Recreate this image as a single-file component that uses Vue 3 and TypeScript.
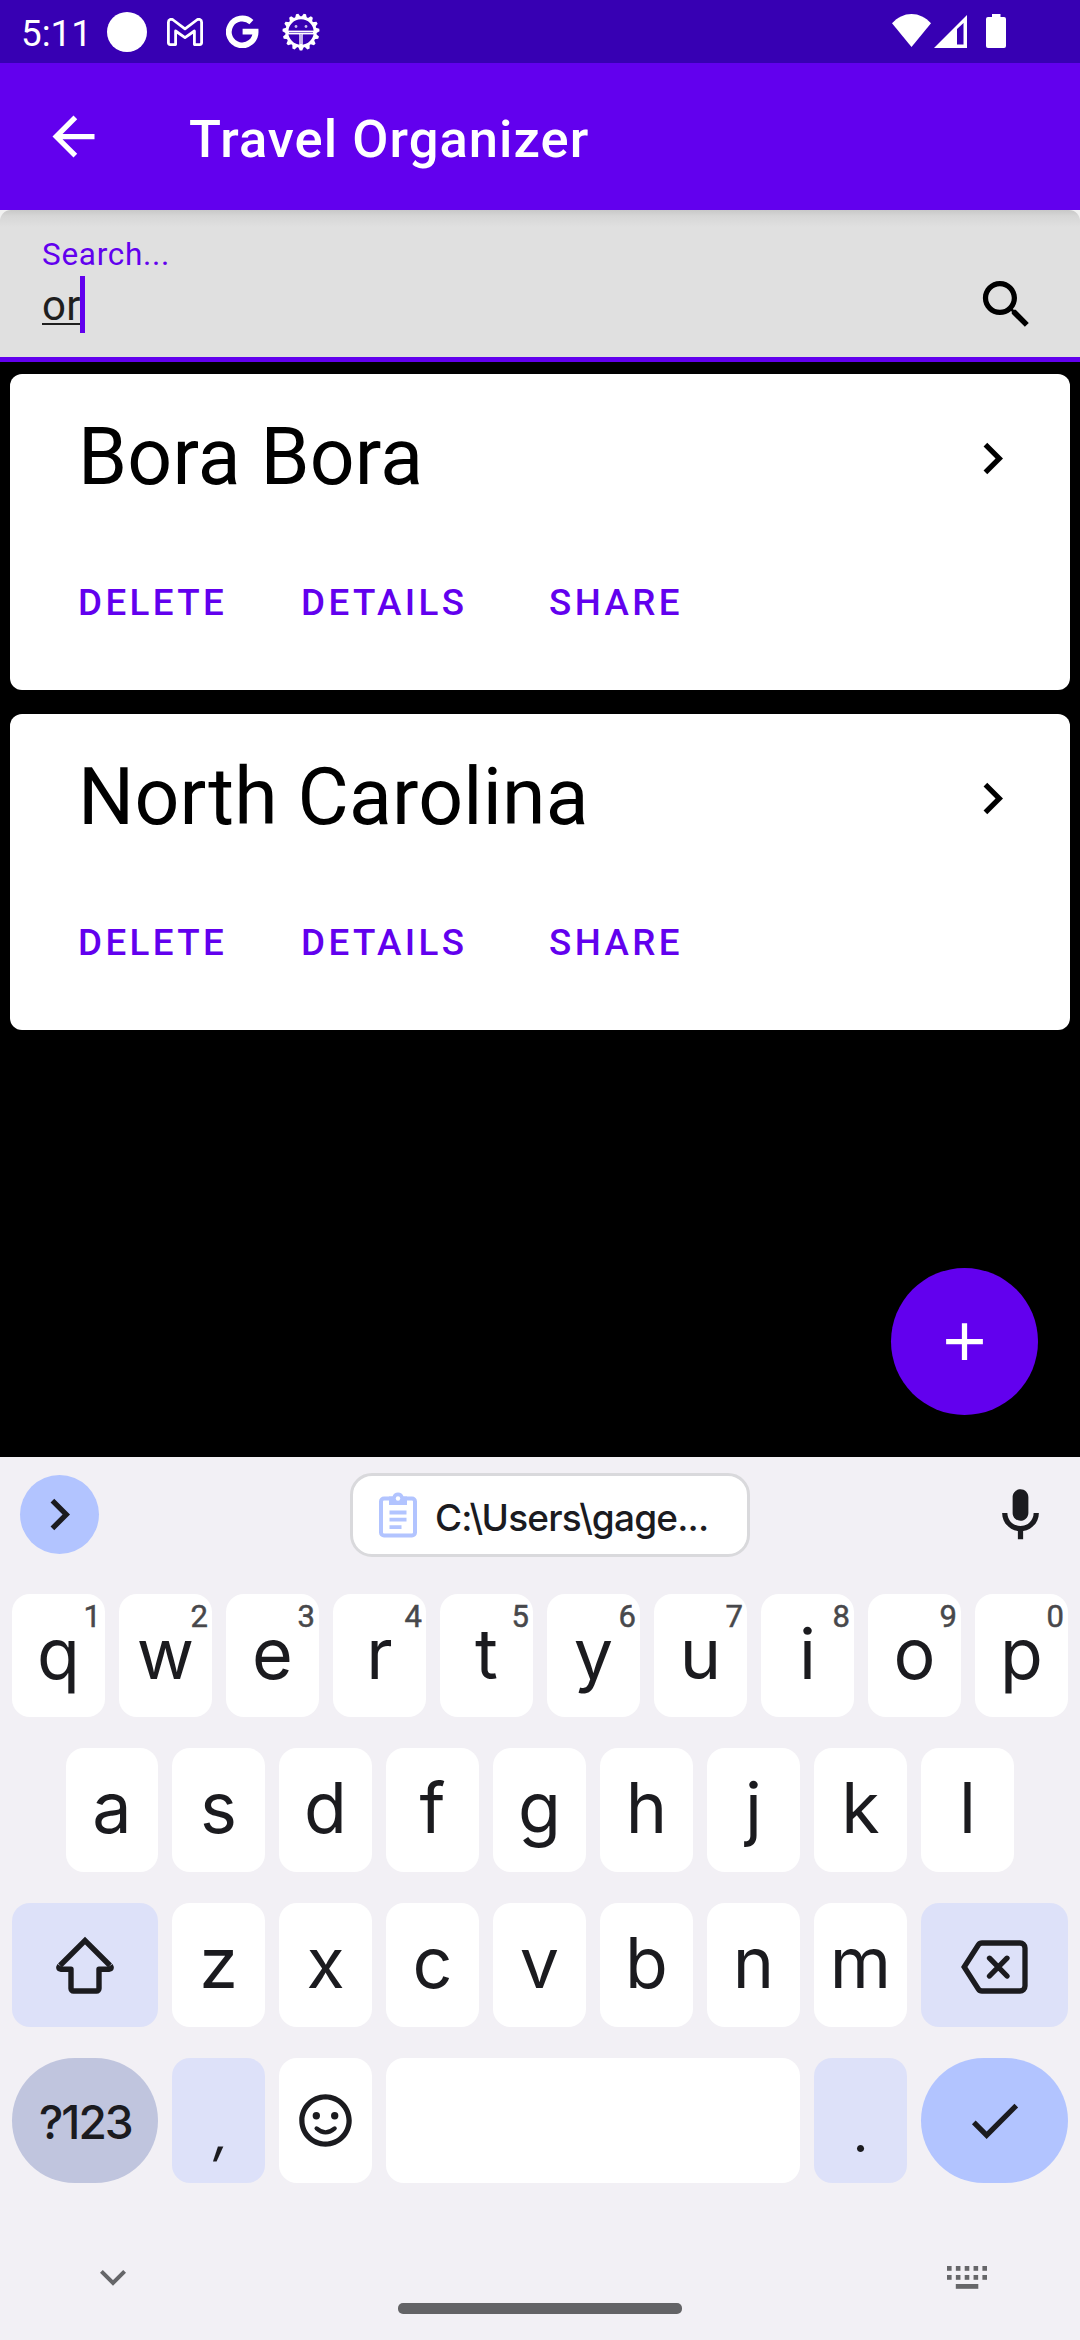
<script setup lang="ts">
interface Key {
  label: string
  hint?: string
}

const trips: string[] = ['Bora Bora', 'North Carolina']
const topRow: Key[] = 'qwertyuiop'.split('').map((label, i) => ({ label, hint: String((i + 1) % 10) }))
const homeRow: string[] = 'asdfghjkl'.split('')
const lowerRow: string[] = 'zxcvbnm'.split('')
const teeth: number[] = Array.from({ length: 15 }, (_, i) => i * 24 + 12)
const dots: number[] = [0, 1, 2, 3, 4]
</script>

<template>
  <div class="screen">
    <div class="status">
      <span class="clock">5:11</span>
      <span class="disc"></span>
      <svg class="gmail" width="36" height="28" viewBox="0 0 36 28" fill="none" stroke="#fff" stroke-width="2.8" stroke-linejoin="round">
        <path d="M1.400 4.300v20.300a2 2 0 0 0 2 2h5.200V13L18 19.600 27.400 13v13.600h5.200a2 2 0 0 0 2-2V4.300c0-2.700-2.800-3.800-4.800-2.300L18 10.800 6.200 2C4.200.5 1.400 1.600 1.400 4.300z" />
      </svg>
      <svg class="google" width="33" height="33" viewBox="0 0 33 33" fill="none" stroke="#fff" stroke-width="5.800">
        <path d="M25.400 7.200A13.400 13.400 0 1 0 29.600 16.600H16.600" />
      </svg>
      <svg class="bug" width="38" height="38" viewBox="-19 -19 38 38">
        <circle r="14.200" fill="none" stroke="#fff" stroke-width="3" />
        <path v-for="a in teeth" :key="a" d="M-3-14.500-1.200-18.500H1.200L3-14.500z" fill="#fff" :transform="`rotate(${a})`" />
        <path d="M-13 .5H13" stroke="#fff" stroke-width="3.800" />
        <path d="M0 2V14" stroke="#fff" stroke-width="3.400" />
        <path d="M-12 .5H12M0 2V12" stroke="#8a6bd6" stroke-width="1" />
        <circle cx="-5" cy="-5.500" r="1.400" fill="#cbbcee" />
        <circle cx="5" cy="-5.500" r="1.400" fill="#cbbcee" />
      </svg>
      <svg class="wifi" width="39" height="33" viewBox="0 0 39 33" fill="#fff">
        <path d="M19.500 33 0 9.200C5.500 3.400 12 0 19.500 0S33.500 3.400 39 9.200z" />
      </svg>
      <svg class="signal" width="33" height="33" viewBox="0 0 33 33" fill="#fff">
        <path fill-rule="evenodd" d="M0 33 33 0v33zM23 14v15.500h6.500V8z" />
      </svg>
      <svg class="battery" width="20" height="34" viewBox="0 0 20 34" fill="#fff">
        <path d="M6 0h8.500v3H18a2 2 0 0 1 2 2v27a2 2 0 0 1-2 2H2a2 2 0 0 1-2-2V5a2 2 0 0 1 2-2h4z" />
      </svg>
    </div>

    <header class="appbar">
      <svg class="icon" viewBox="0 0 24 24" fill="#fff"><path d="M20 11H7.830l5.590-5.590L12 4l-8 8 8 8 1.410-1.410L7.830 13H20v-2z" /></svg>
      <h1>Travel Organizer</h1>
    </header>

    <div class="field-wrap">
      <div class="field">
        <div class="field-text">
          <label>Search...</label>
          <div class="value"><span>or</span><i class="caret"></i></div>
        </div>
        <svg class="icon" viewBox="0 0 24 24"><path d="M15.500 14h-.790l-.280-.270C15.410 12.590 16 11.110 16 9.500 16 5.910 13.090 3 9.500 3S3 5.910 3 9.500 5.910 16 9.500 16c1.610 0 3.090-.590 4.230-1.570l.270.280v.790l5 4.990L20.490 19l-4.990-5zm-6 0C7.010 14 5 11.990 5 9.500S7.010 5 9.500 5 14 7.010 14 9.500 11.990 14 9.500 14z" /></svg>
      </div>
    </div>

    <main class="list">
      <article v-for="trip in trips" :key="trip" class="card">
        <div class="card-head">
          <h2>{{ trip }}</h2>
          <svg class="icon" viewBox="0 0 24 24"><path d="M10 6 8.590 7.410 13.170 12l-4.580 4.590L10 18l6-6z" /></svg>
        </div>
        <div class="actions">
          <span class="delete">DELETE</span>
          <span class="details">DETAILS</span>
          <span>SHARE</span>
        </div>
      </article>
      <div class="fab">
        <svg class="icon" viewBox="0 0 24 24" fill="#fff"><path d="M19 13h-6v6h-2v-6H5v-2h6V5h2v6h6v2z" /></svg>
      </div>
    </main>

    <section class="keyboard">
      <div class="strip">
        <div class="expand">
          <svg class="icon" viewBox="0 0 24 24"><path d="M10 6 8.590 7.410 13.170 12l-4.580 4.590L10 18l6-6z" /></svg>
        </div>
        <div class="clip">
          <svg width="38" height="46" viewBox="0 0 38 46">
            <rect x="2" y="6.500" width="34" height="37" rx="3" fill="none" stroke="#b2c4ff" stroke-width="4" />
            <path d="M10 4.500h3.500a5.800 5.800 0 0 1 11 0H28V13H10z" fill="#b2c4ff" />
            <circle cx="19" cy="6.500" r="2.200" fill="#fff" />
            <path d="M10.500 20.500h17M10.500 27.700h17M10.500 35.200h12" stroke="#b2c4ff" stroke-width="3.800" />
          </svg>
          <span>C:\Users\gage...</span>
        </div>
        <svg class="icon mic" viewBox="0 0 24 24"><path d="M12 14c1.660 0 3-1.340 3-3V5c0-1.660-1.340-3-3-3S9 3.340 9 5v6c0 1.660 1.340 3 3 3zM17 11c0 2.760-2.240 5-5 5s-5-2.240-5-5H5c0 3.530 2.610 6.430 6 6.920V21h2v-3.080c3.390-.490 6-3.390 6-6.920h-2z" /></svg>
      </div>

      <div class="row first">
        <div v-for="k in topRow" :key="k.label" class="key letter">{{ k.label }}<sup>{{ k.hint }}</sup></div>
      </div>
      <div class="row home">
        <div v-for="k in homeRow" :key="k" class="key letter">{{ k }}</div>
      </div>
      <div class="row">
        <div class="key wide tint">
          <svg width="60" height="58" viewBox="0 0 60 58" fill="none" stroke="#1b1b1f" stroke-width="5.400" stroke-linejoin="round">
            <path stroke-linejoin="miter" d="M5 29.500 30 4.500 55 29.500" />
            <path d="M4.700 29.500Q2.500 33 6 33.200H16V52.500a2.500 2.500 0 0 0 2.500 2.500h23a2.500 2.500 0 0 0 2.500-2.500V33.200H54Q57.500 33 55.300 29.500" />
          </svg>
        </div>
        <div v-for="k in lowerRow" :key="k" class="key letter">{{ k }}</div>
        <div class="key side tint">
          <svg class="erase" width="67" height="54" viewBox="0 0 67 54" fill="none" stroke="#1b1b1f" stroke-width="5.300">
            <path d="M3.200 27 17.300 5Q18.600 3 21 3H59a5 5 0 0 1 5 5V46a5 5 0 0 1-5 5H21Q18.600 51 17.300 49z" />
            <path d="M28.500 18.200 46 36M46 18.200 28.500 36" stroke-linecap="round" />
          </svg>
        </div>
      </div>
      <div class="row last">
        <div class="key wide symbols"><span>?123</span></div>
        <div class="key tint punct comma"><span>,</span></div>
        <div class="key">
          <svg class="icon" viewBox="0 0 24 24"><path d="M11.990 2C6.470 2 2 6.480 2 12s4.470 10 9.990 10C17.520 22 22 17.520 22 12S17.520 2 11.990 2zM12 20c-4.420 0-8-3.580-8-8s3.580-8 8-8 8 3.580 8 8-3.580 8-8 8z" /><circle cx="8.500" cy="10.200" r="1.400" /><circle cx="15.500" cy="10.200" r="1.400" /><path d="M8.600 15Q12 18 15.500 15" fill="none" stroke="#1b1b1f" stroke-width="1.600" stroke-linecap="round" /></svg>
        </div>
        <div class="key space"></div>
        <div class="key tint punct"><span>.</span></div>
        <div class="key side enter">
          <svg class="icon" viewBox="0 0 24 24"><path d="M9 16.170 4.830 12l-1.420 1.410L9 19 21 7l-1.410-1.410z" /></svg>
        </div>
      </div>

      <div class="nav">
        <svg class="down" width="26" height="16" viewBox="0 0 26 16" fill="none" stroke="#666669" stroke-width="4"><path d="M1.400 1.400 13 13 24.600 1.400" /></svg>
        <span class="pill"></span>
        <svg class="switcher" width="41" height="23" viewBox="0 0 41 23" fill="#666669">
          <g v-for="d in dots" :key="d">
            <rect :x="d * 8.850" y="0" width="4.600" height="4.800" />
            <rect :x="d * 8.850" y="9" width="4.600" height="4.800" />
          </g>
          <rect x="8.800" y="18" width="22.500" height="4.800" />
        </svg>
      </div>
    </section>
  </div>
</template>

<style>
body {
  margin: 0;
  background: #000;
}
</style>

<style scoped>
.screen {
  width: 1080px;
  height: 2340px;
  overflow: hidden;
  display: flex;
  flex-direction: column;
  background: #000;
  font-family: Roboto, "Liberation Sans", sans-serif;
}
.icon {
  width: 63px;
  height: 63px;
  flex: none;
}
svg {
  display: block;
  flex: none;
}
h1,
h2 {
  margin: 0;
}
.status {
  height: 63px;
  box-sizing: border-box;
  background: #3700b3;
  color: #fff;
  display: flex;
  align-items: center;
  padding: 0 74px 0 21px;
}
.clock {
  width: 86px;
  font-size: 36.75px;
  line-height: 43px;
  margin-top: 3px;
}
.disc {
  width: 40px;
  height: 40px;
  border-radius: 50%;
  background: #fff;
}
.gmail {
  margin-left: 20px;
}
.google {
  margin-left: 23px;
}
.bug {
  margin-left: 23px;
}
.wifi {
  margin: -2px 0 0 auto;
}
.signal {
  margin: -1px 0 0 3px;
}
.battery {
  margin: -1px 0 0 19px;
}
.appbar {
  height: 147px;
  flex: none;
  background: #6200ee;
  color: #fff;
  display: flex;
  align-items: center;
  padding-left: 42px;
}
.appbar h1 {
  margin: 4px 0 0 84px;
  font-size: 52.5px;
  line-height: 62px;
  font-weight: 500;
  letter-spacing: 1.05px;
}
.field-wrap {
  flex: none;
  background: #f1f1f1;
}
.field {
  height: 152px;
  box-sizing: border-box;
  border-bottom: 5px solid #6200ee;
  border-radius: 11px 11px 0 0;
  background: linear-gradient(#c8c8c8, #d6d6d6 6px, #e0e0e0 17px);
  display: flex;
  justify-content: space-between;
  padding: 0 42px 0 42px;
}
.field .icon {
  margin-top: 63px;
}
.field-text {
  padding-top: 26px;
}
label {
  display: block;
  color: #6200ee;
  font-size: 31.5px;
  line-height: 37px;
  letter-spacing: 0.7px;
}
.value {
  display: flex;
  margin-top: 3px;
  color: #1f1f1f;
  font-size: 42px;
  line-height: 60px;
  height: 57px;
  letter-spacing: 0.4px;
}
.value span {
  text-decoration: underline;
  text-decoration-thickness: 2px;
  text-underline-offset: 3px;
}
.caret {
  width: 5px;
  height: 57px;
  margin-left: -1px;
  background: #6200ee;
}
.list {
  position: relative;
  height: 1095px;
  flex: none;
  box-sizing: border-box;
  padding: 12px 10px 0;
  display: flex;
  flex-direction: column;
  gap: 24px;
}
.card {
  height: 316px;
  box-sizing: border-box;
  border-radius: 12px;
  background: #fff;
  padding: 37px 46px 0 68px;
}
.card-head {
  display: flex;
  justify-content: space-between;
  height: 92px;
}
.card-head h2 {
  font-size: 78.75px;
  line-height: 92px;
  font-weight: 400;
  letter-spacing: 0.2px;
}
.card-head .icon {
  margin-top: 16px;
}
.actions {
  display: flex;
  margin-top: 78px;
  color: #6200ee;
  font-size: 36.75px;
  line-height: 43px;
  font-weight: 500;
  letter-spacing: 3.4px;
}
.delete {
  width: 223px;
}
.details {
  width: 248px;
}
.fab {
  position: absolute;
  right: 42px;
  bottom: 42px;
  width: 147px;
  height: 147px;
  border-radius: 50%;
  background: #6200ee;
  display: flex;
  align-items: center;
  justify-content: center;
}
.keyboard {
  flex: 1;
  background: #f2f0f5;
  color: #1b1b1f;
  fill: #1b1b1f;
  font-family: Inter, Roboto, sans-serif;
}
.strip {
  height: 137px;
  box-sizing: border-box;
  padding: 16px 28px 0 20px;
  display: flex;
}
.expand {
  width: 79px;
  height: 79px;
  margin-top: 2px;
  border-radius: 50%;
  background: #b2c4ff;
  display: flex;
  align-items: center;
  justify-content: center;
}
.clip {
  margin-left: 251px;
  width: 400px;
  height: 84px;
  box-sizing: border-box;
  border: 3px solid #d9d9dc;
  border-radius: 22px;
  background: #fff;
  display: flex;
  align-items: center;
  padding-left: 26px;
}
.clip span {
  margin: 4px 0 0 18px;
  font-size: 37px;
  font-weight: 500;
  letter-spacing: -0.8px;
  white-space: nowrap;
}
.mic {
  margin: 11px 0 0 auto;
}
.row {
  display: flex;
  gap: 14px;
  height: 124px;
  padding: 0 12px;
  margin-bottom: 31px;
}
.row.first {
  height: 123px;
}
.row.home {
  padding: 0 66px;
}
.row.last {
  height: 125px;
  margin-bottom: 0;
}
.key {
  position: relative;
  width: 93px;
  flex: none;
  box-sizing: border-box;
  border-radius: 18px;
  background: #fff;
  display: flex;
  justify-content: center;
  align-items: center;
  font-size: 70px;
  line-height: 84px;
}
.home .key:first-child {
  width: 92px;
}
.letter {
  padding-bottom: 4px;
}
.key sup {
  position: absolute;
  right: 4px;
  top: 5px;
  font-family: Roboto, sans-serif;
  font-size: 31px;
  line-height: 36px;
  font-weight: 400;
  -webkit-text-stroke: 0.5px #48484b;
  color: #48484b;
}
.wide {
  width: 146px;
}
.side {
  width: 147px;
}
.tint {
  background: #dde1f9;
}
.erase {
  margin-top: 3px;
}
.symbols {
  border-radius: 63px;
  background: #c0c5de;
  font-size: 47px;
  font-weight: 500;
  letter-spacing: -2px;
}
.symbols span {
  margin-top: 2px;
  transform: scaleX(0.98);
}
.punct {
  font-size: 54px;
}
.punct span {
  margin-top: 24px;
}
.comma span {
  transform: skewX(-10deg);
  transform-origin: 50% 75%;
}
.space {
  flex: 1;
}
.enter {
  border-radius: 63px;
  background: #b2c4ff;
}
.nav {
  display: flex;
  justify-content: space-between;
  padding: 0 92px 0 100px;
}
.down {
  margin-top: 87px;
}
.pill {
  width: 284px;
  height: 11px;
  margin: 120px 0 0 7px;
  border-radius: 5px;
  background: #636366;
}
.switcher {
  margin-top: 83px;
}
</style>
